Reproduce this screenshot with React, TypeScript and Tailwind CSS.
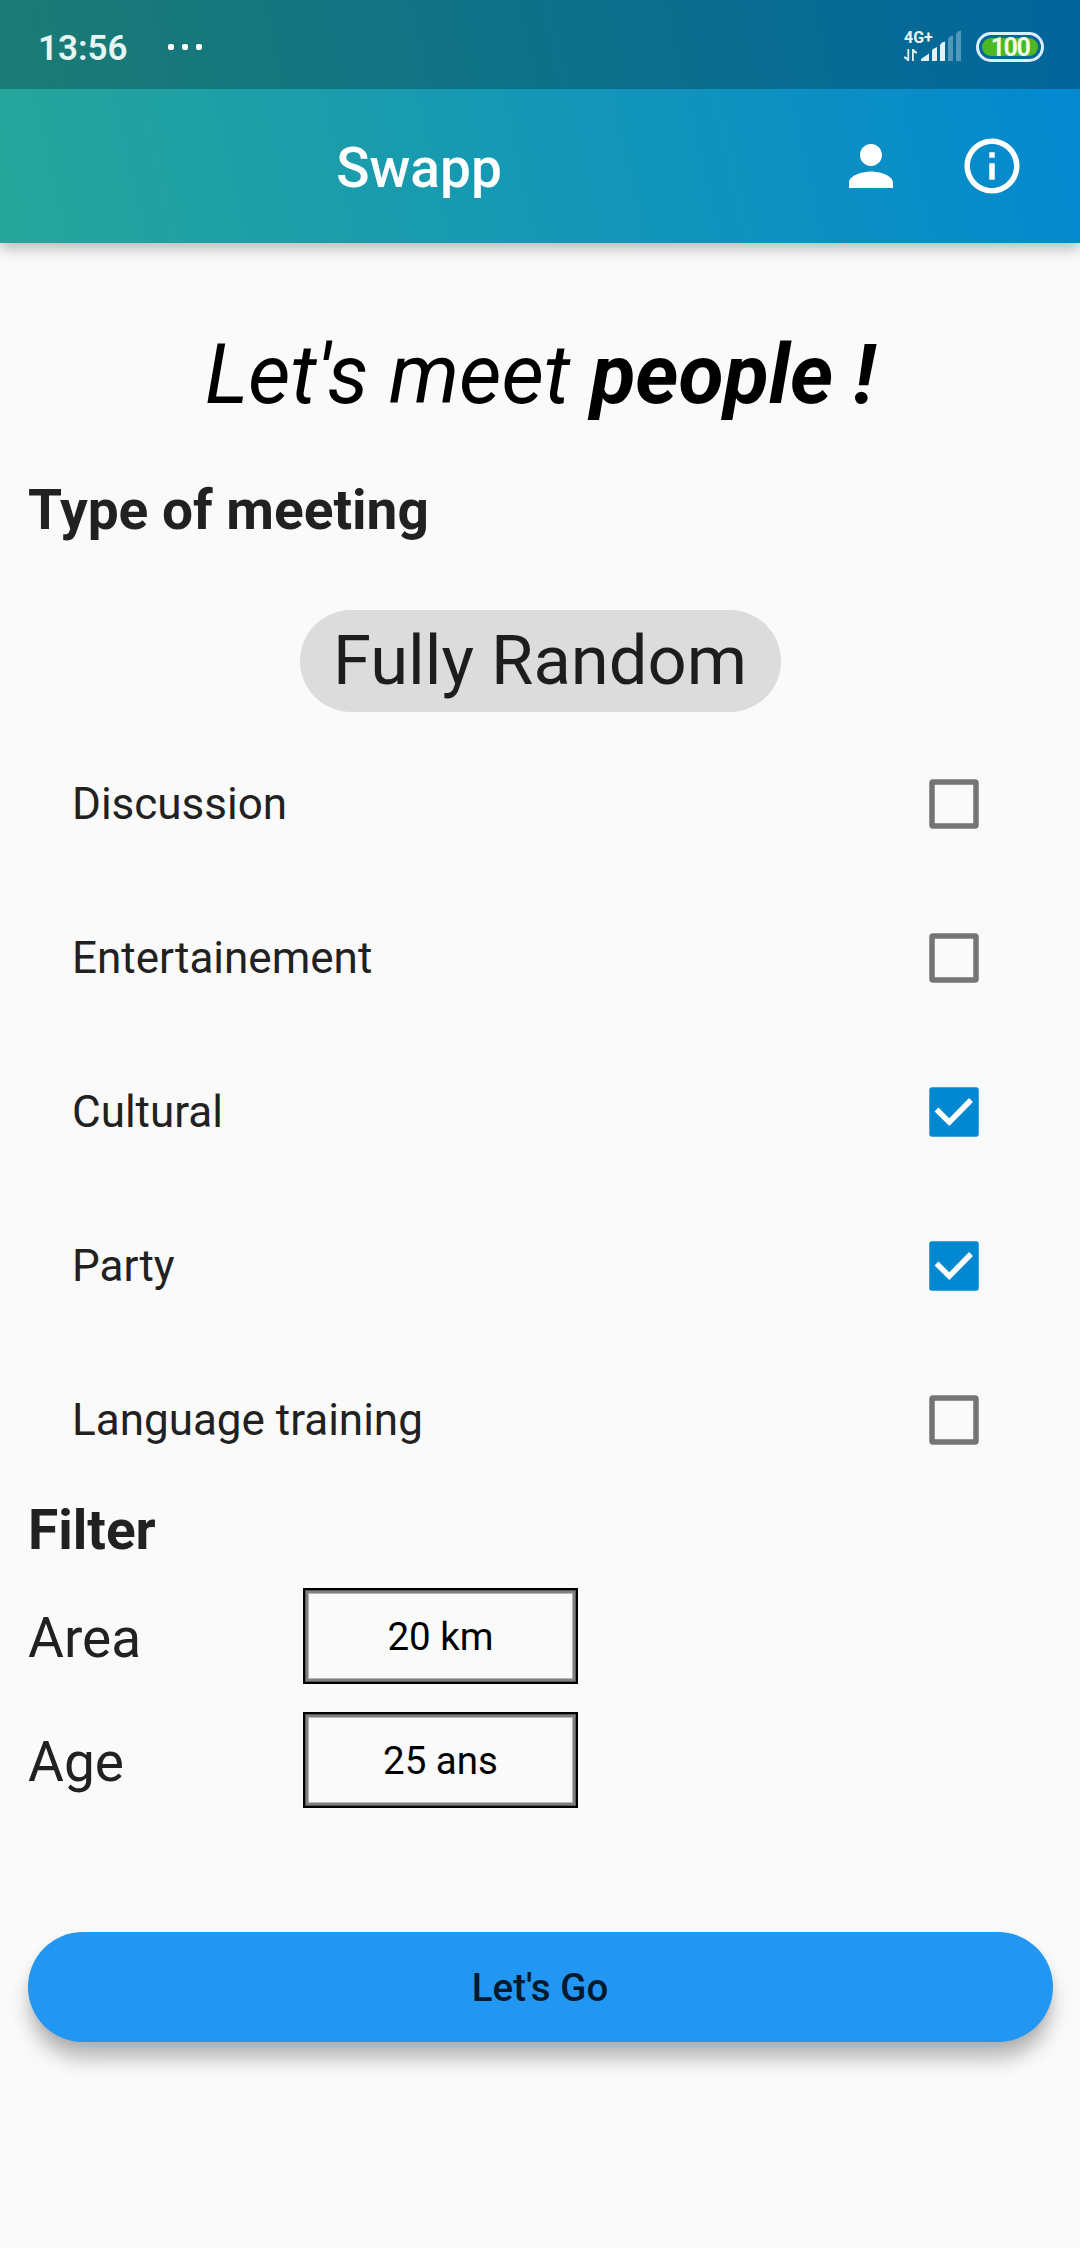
import { useState } from "react";

function SignalIcon() {
  return (
    <svg width="58" height="34" viewBox="0 0 58 34" fill="#e3f1fa">
      <path d="M4.3 19v12M8.9 31V19" fill="none" stroke="#e3f1fa" strokeWidth="1.8" />
      <path d="M0 26.5h1.5L5 29v2H4L0 28zM13 23.5h-1.5L8.2 21v-2h1L13 22z" />
      <path d="M17 31V29L25 23.5V31z" />
      <path d="M28 31V20l2-1.5 3-1.5V31z" />
      <path d="M36 31V15l2-2.5 3-1V31z" />
      <path d="M44 31V9l2-2.5 3-1V31z" opacity=".35" />
      <path d="M52 31V4l2-2.5 3-1V31z" opacity=".35" />
    </svg>
  );
}

function StatusBar() {
  return (
    <div className="flex h-[89px] items-center bg-black/25 pl-[38px] pr-[36px] text-[#e6f5f4]">
      <span className="mt-[7px] w-[130px] text-[35px] leading-[41px] font-semibold">13:56</span>
      <div className="mt-[5px] flex gap-[8px]">
        <i className="size-[6px] rounded-[2px] bg-white" />
        <i className="size-[6px] rounded-[2px] bg-white" />
        <i className="size-[6px] rounded-[2px] bg-white" />
      </div>
      <div className="relative ml-auto mt-[5px] flex h-[34px] items-end">
        <span className="absolute left-0 top-[-2px] text-[16px] leading-[19px] font-bold">4G+</span>
        <SignalIcon />
      </div>
      <div className="ml-[14px] mt-[5px] flex h-[30px] w-[68px] items-center justify-center rounded-full border-[3px] border-[#dcefff] p-[3px]">
        <div className="flex h-[18px] w-full items-center justify-center rounded-full bg-[#4cb922] pt-px text-[25px] leading-none font-bold tracking-[-1.5px] text-[#effbe8]">
          100
        </div>
      </div>
    </div>
  );
}

function AppBar() {
  return (
    <div className="flex h-[154px] items-center pr-[55px] text-white">
      <h1 className="mt-[3px] w-[838px] text-center text-[55px] leading-[64px] font-medium">Swapp</h1>
      <svg className="size-[66px] shrink-0" viewBox="0 0 24 24" fill="currentColor">
        <path d="M12 12c2.21 0 4-1.79 4-4s-1.79-4-4-4-4 1.79-4 4 1.79 4 4 4zm0 2c-2.67 0-8 1.34-8 4v2h16v-2c0-2.66-5.33-4-8-4z" />
      </svg>
      <svg className="ml-[55px] size-[66px] shrink-0" viewBox="0 0 24 24" fill="currentColor">
        <path d="M11 17h2v-6h-2v6zm1-15C6.48 2 2 6.48 2 12s4.48 10 10 10 10-4.48 10-10S17.52 2 12 2zm0 18c-4.41 0-8-3.59-8-8s3.59-8 8-8 8 3.59 8 8-3.59 8-8 8zM11 9h2V7h-2v2z" />
      </svg>
    </div>
  );
}

function CheckRow({ label, initial }: { label: string; initial: boolean }) {
  const [on, setOn] = useState(initial);
  return (
    <div className="flex h-[154px] items-center justify-between pl-[72px] pr-[101px]">
      <span className="text-[44px] leading-[52px]">{label}</span>
      <button role="checkbox" aria-checked={on} aria-label={label} onClick={() => setOn(!on)}>
        <svg className="size-[50px]" viewBox="0 0 50 50">
          {on ? (
            <>
              <rect x=".25" y=".25" width="49.5" height="49.5" rx="2.75" fill="#0288d1" />
              <path d="M7.5 22.5 20.3 35.2 42 13" fill="none" stroke="#fff" strokeWidth="5.5" />
            </>
          ) : (
            <rect x="3" y="3" width="44" height="44" rx="1" fill="none" stroke="#757575" strokeWidth="5.5" />
          )}
        </svg>
      </button>
    </div>
  );
}

function FilterRow({ label, value }: { label: string; value: string }) {
  return (
    <div className="flex h-[124px] items-center pl-[28px]">
      <span className="mt-[3px] w-[275px] text-[55px] leading-[64px]">{label}</span>
      <div className="h-[96px] w-[275px] border-2 border-black">
        <div className="flex h-full w-full items-center justify-center text-[38.5px] leading-[45px] text-black shadow-[inset_0_0_0_1px_#585858,inset_0_0_0_3px_#808080,inset_0_0_0_4px_#b4b4b4]">
          {value}
        </div>
      </div>
    </div>
  );
}

const meetingTypes = [
  { label: "Discussion", initial: false },
  { label: "Entertainement", initial: false },
  { label: "Cultural", initial: true },
  { label: "Party", initial: true },
  { label: "Language training", initial: false },
];

export default function App() {
  return (
    <div className="flex h-[2248px] w-[1080px] flex-col bg-[#fafafa] font-['Roboto',sans-serif] text-[#212121]">
      <header className="bg-[linear-gradient(77.3deg,#26a69a,#0288d1)] shadow-[0_5px_14px_rgba(0,0,0,0.28)]">
        <StatusBar />
        <AppBar />
      </header>
      <main className="flex flex-col pt-[84px]">
        <p className="text-center text-[82.5px] leading-[96px] text-black italic">
          Let's meet <b className="font-bold">people !</b>
        </p>
        <h2 className="mt-[55px] pl-[28px] text-[55px] leading-[64px] font-bold">Type of meeting</h2>
        <button className="mt-[68px] h-[102px] w-[481px] self-center rounded-full bg-[#dcdcdc] text-[68.75px] leading-[80px] text-[#1d1d1d]">
          Fully Random
        </button>
        <section className="mt-[15px]">
          {meetingTypes.map((t) => (
            <CheckRow key={t.label} {...t} />
          ))}
        </section>
        <h2 className="mt-px pl-[28px] text-[55px] leading-[64px] font-bold">Filter</h2>
        <section className="mt-[12px]">
          <FilterRow label="Area" value="20 km" />
          <FilterRow label="Age" value="25 ans" />
        </section>
        <button className="mx-[27.5px] mt-[109.5px] h-[110px] rounded-full bg-[#2196f3] pt-px text-[38.5px] leading-[45px] font-medium text-[#04192b] shadow-[0_18px_20px_-2px_rgba(0,0,0,0.28),0_3px_8px_rgba(0,0,0,0.06)]">
          Let's Go
        </button>
      </main>
    </div>
  );
}
